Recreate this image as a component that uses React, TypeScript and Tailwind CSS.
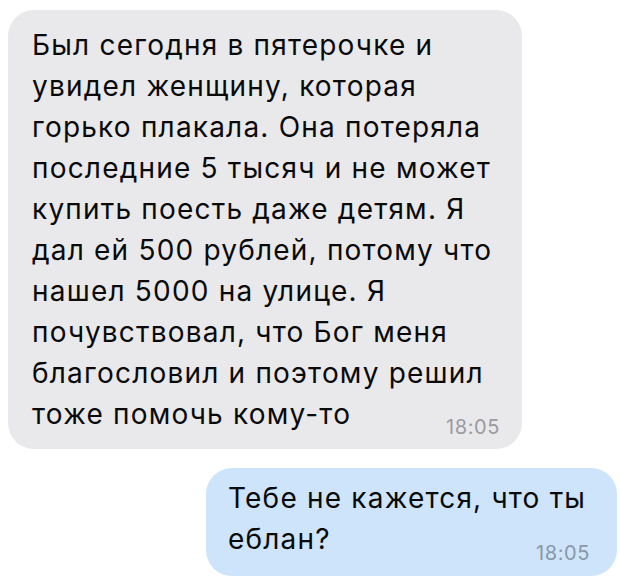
import React from "react";

const font = { fontFamily: 'Inter, "Noto Sans", sans-serif' };

const grayLines = [
  "Был сегодня в пятерочке и",
  "увидел женщину, которая",
  "горько плакала. Она потеряла",
  "последние 5 тысяч и не может",
  "купить поесть даже детям. Я",
  "дал ей 500 рублей, потому что",
  "нашел 5000 на улице. Я",
  "почувствовал, что Бог меня",
  "благословил и поэтому решил",
  "тоже помочь кому-то",
];

const blueLines = ["Тебе не кажется, что ты", "еблан?"];

export default function App() {
  return (
    <div
      className="w-[620px] h-[588px] bg-white flex flex-col overflow-hidden"
      style={font}
    >
      <div className="relative ml-[8px] mt-[10px] w-[514px] rounded-[26px] bg-[#e9e9eb] pl-[24px] pt-[15px] pb-[14px] text-[28px] leading-[41px] tracking-[1.2px] text-[#0a0a0a]">
        {grayLines.map((l, i) => (
          <div key={i} className="whitespace-nowrap">
            {l}
          </div>
        ))}
        <span className="absolute right-[22px] bottom-[11px] text-[20px] leading-[22px] tracking-[0.6px] text-[#9a9aa0]">
          18:05
        </span>
      </div>
      <div className="relative self-end mr-[3px] mt-[19px] w-[411px] rounded-[26px] bg-[#cde4fa] pl-[22px] pt-[10px] pb-[16px] text-[28px] leading-[41px] tracking-[1.2px] text-[#0a0a0a]">
        {blueLines.map((l, i) => (
          <div key={i} className="whitespace-nowrap">
            {l}
          </div>
        ))}
        <span className="absolute right-[27px] bottom-[12px] text-[20px] leading-[22px] tracking-[0.6px] text-[#8b97a6]">
          18:05
        </span>
      </div>
    </div>
  );
}
